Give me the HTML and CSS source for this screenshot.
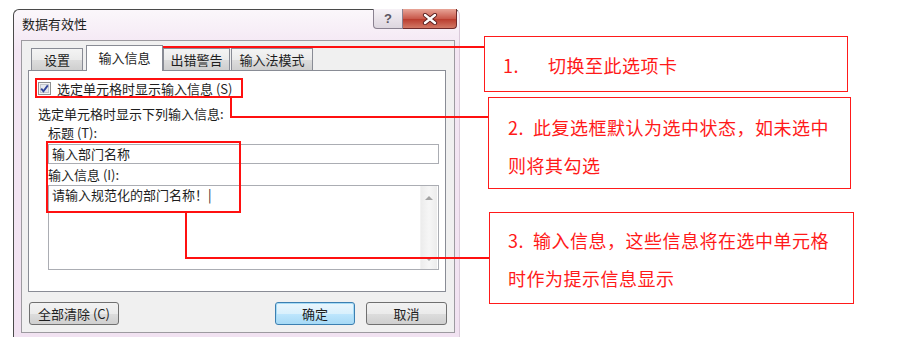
FILE: index.html
```html
<!DOCTYPE html>
<html lang="zh-CN">
<head>
  <meta charset="UTF-8">
  <title>数据有效性 - 输入信息</title>
  <link rel="stylesheet" href="styles.css">
</head>
<body>
  <div class="stage">

    <!-- 对话框 -->
    <div class="dialog">
      <div class="titlebar">
        <span class="title">数据有效性</span>
        <div class="caption-btns">
          <span class="cbtn help">?</span>
          <span class="cbtn close">
            <svg width="16" height="12" viewBox="0 0 16 12">
              <path d="M3 2 L13 10 M13 2 L3 10" stroke="#5a2020" stroke-width="4.2" stroke-linecap="round"/>
              <path d="M3 2 L13 10 M13 2 L3 10" stroke="#fff" stroke-width="2.4" stroke-linecap="round"/>
            </svg>
          </span>
        </div>
      </div>

      <div class="client">
        <div class="tabs">
          <span class="tab t1">设置</span>
          <span class="tab t2 active">输入信息</span>
          <span class="tab t3">出错警告</span>
          <span class="tab t4">输入法模式</span>
        </div>

        <div class="panel">
          <div class="check-row">
            <span class="checkbox">
              <svg width="13" height="13" viewBox="0 0 13 13">
                <rect x="0.5" y="0.5" width="12" height="12" fill="#f4f4f4" stroke="#8e8f8f"/>
                <rect x="2.5" y="2.5" width="8" height="8" fill="#e6e9ee" stroke="#c3c6cc"/>
                <path d="M3.2 6.6 L5.4 9.2 L9.8 3.4" fill="none" stroke="#31449a" stroke-width="1.8"/>
              </svg>
            </span>
            <span>选定单元格时显示输入信息 (S)</span>
          </div>
          <p class="caption">选定单元格时显示下列输入信息:</p>
          <div class="fields">
            <div class="field-label">标题 (T):</div>
            <div class="textbox">输入部门名称</div>
            <div class="field-label">输入信息 (I):</div>
            <div class="textarea">
              <span class="ta-text">请输入规范化的部门名称！|</span>
              <div class="scrollbar">
                <span class="arrow up"></span>
                <span class="arrow down"></span>
              </div>
            </div>
          </div>
        </div>

        <div class="buttons">
          <button class="btn">全部清除 (C)</button>
          <span class="spacer"></span>
          <button class="btn default">确定</button>
          <button class="btn cancel">取消</button>
        </div>
      </div>
    </div>

    <!-- 说明框 -->
    <div class="notes">
      <div class="note n1"><span class="num">1.</span>切换至此选项卡</div>
      <div class="note n2"><span class="num2">2.</span>此复选框默认为选中状态，如未选中<br>则将其勾选</div>
      <div class="note n3"><span class="num2">3.</span>输入信息，这些信息将在选中单元格<br>时作为提示信息显示</div>
    </div>

    <!-- 红色标注线 -->
    <svg class="marks" width="916" height="337" viewBox="0 0 916 337">
      <g fill="none" stroke="#ff1010" stroke-width="2">
        <rect x="91" y="47" width="71" height="23"/>
        <path d="M162 47 H484"/>
        <rect x="36" y="79" width="206" height="18"/>
        <path d="M231 97 V117 H488"/>
        <rect x="47" y="142" width="193" height="70"/>
        <path d="M186 212 V258 H489"/>
      </g>
    </svg>
  </div>
</body>
</html>
```

FILE: styles.css
```css
body { margin: 0; background: #fff; font-family: "Noto Sans CJK SC", "Liberation Sans", sans-serif; }
.stage { position: relative; display: flex; width: 916px; height: 337px; overflow: hidden; }

/* 对话框外框 */
.dialog { margin: 9px 0 0 13px; width: 447px; height: 330px; box-sizing: border-box; border: 1px solid #4a4a4a; border-right-color: #d9c9d9; border-bottom: none; border-radius: 6px 6px 0 0; background: linear-gradient(#fbf7fb, #f3e6f3 40px, #f1e2f1); }
.titlebar { display: flex; height: 30px; }
.title { padding: 4px 0 0 8px; font-size: 13px; line-height: 20px; color: #1e1e1e; }
.caption-btns { display: flex; margin: -1px 2px 0 auto; height: 20px; }
.cbtn { display: flex; align-items: center; justify-content: center; box-sizing: border-box; height: 20px; border: 1px solid #8a8190; border-top: none; }
.help { width: 30px; border-radius: 0 0 0 4px; background: linear-gradient(#f6f1f6, #ddd6df); font: bold 13px "Liberation Sans", sans-serif; color: #5a5560; }
.close { width: 54px; border-left: none; border-color: #6e2a2a; border-radius: 0 0 4px 0; background: linear-gradient(#e8a598, #c95a4c 50%, #b8392b 51%, #d27865); }

.client { margin-left: 7px; width: 434px; height: 293px; box-sizing: border-box; border: 1px solid #9d9aa0; background: #f0f0f0; }

/* 选项卡 */
.tabs { display: flex; align-items: flex-end; height: 29px; padding-left: 9px; }
.tab { display: flex; align-items: center; justify-content: center; box-sizing: border-box; height: 22px; border: 1px solid #898c95; border-bottom: none; background: linear-gradient(#f4f4f4, #ebebeb 50%, #dddddd 51%, #cfcfcf); font-size: 13px; color: #1e1e1e; }
.t1 { width: 52px; }
.t2 { width: 77px; margin-left: 3px; }
.t3 { width: 67px; }
.t4 { width: 82px; margin-left: 1px; }
.tab.active { position: relative; z-index: 1; height: 26px; margin-bottom: -1px; background: #fff; padding-bottom: 3px; }

.panel { margin-left: 6px; width: 418px; height: 222px; box-sizing: border-box; border: 1px solid #898c95; background: #fff; padding-left: 9px; font-size: 13px; color: #1e1e1e; }
.check-row { display: flex; align-items: center; gap: 6px; height: 13px; margin-top: 11px; line-height: 13px; }
.checkbox { display: block; width: 13px; height: 13px; }
.checkbox svg { display: block; }
.caption { margin: 11px 0 0; line-height: 16px; }
.fields { padding-left: 10px; }
.field-label { margin-top: 3px; line-height: 16px; }
.textbox { margin-top: 3px; width: 391px; height: 20px; box-sizing: border-box; border: 1px solid #abadb3; padding-left: 3px; line-height: 18px; }
.field-label + .textarea { margin-top: 2px; }
.textarea { display: flex; width: 391px; height: 85px; box-sizing: border-box; border: 1px solid #abadb3; }
.ta-text { flex: 1; padding: 1px 0 0 3px; line-height: 16px; }
.scrollbar { display: flex; flex-direction: column; justify-content: space-between; align-items: center; width: 17px; margin-right: 1px; padding: 10px 0 8px; box-sizing: border-box; background: linear-gradient(90deg, #ececec, #f6f6f6 50%, #ececec); border-left: 1px solid #f2f2f2; }
.arrow { width: 0; height: 0; border-left: 4px solid transparent; border-right: 4px solid transparent; }
.arrow.up { border-bottom: 4px solid #a4a4a4; }
.arrow.down { border-top: 4px solid #a4a4a4; }

/* 按钮 */
.buttons { display: flex; margin-top: 10px; padding: 0 7px; }
.spacer { flex: 1; }
.btn { width: 90px; height: 23px; padding: 0; border: 1px solid #707070; border-radius: 3px; background: linear-gradient(#f2f2f2, #ebebeb 50%, #dddddd 51%, #cfcfcf); font: 13px "Noto Sans CJK SC", sans-serif; color: #1e1e1e; }
.btn.default { width: 80px; border-color: #3c7fb1; box-shadow: inset 0 0 0 1px #a6dbf6; background: linear-gradient(#eaf6fd, #d9f0fc 50%, #bee6fd 51%, #a7d9f5); }
.btn.cancel { width: 81px; margin-left: 11px; }

/* 说明框 */
.notes { display: flex; flex-direction: column; margin-left: 24px; }
.note { box-sizing: border-box; border: 1px solid #ff1a1a; color: #ff1a1a; font-size: 18px; letter-spacing: 0.5px; line-height: 38px; }
.n1 { margin-top: 36px; width: 364px; height: 56px; padding: 9px 0 0 18px; }
.n2 { margin: 5px 0 0 4px; width: 363px; height: 92px; padding: 10px 0 0 19px; }
.n3 { margin: 23px 0 0 5px; width: 365px; height: 92px; padding: 8px 0 0 18px; }
.num { display: inline-block; width: 45px; }
.num2 { display: inline-block; width: 25px; }

.marks { position: absolute; top: 0; left: 0; pointer-events: none; }
```
